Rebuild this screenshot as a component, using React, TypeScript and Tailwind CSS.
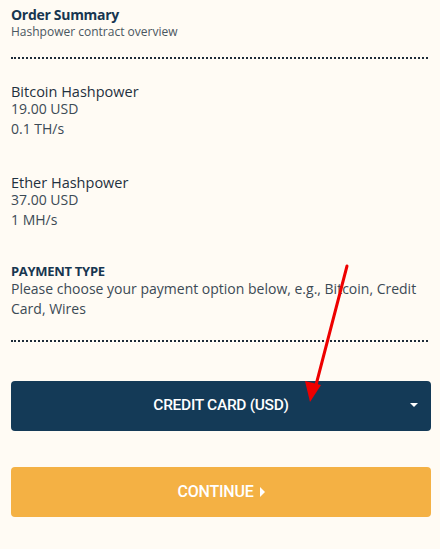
import React from "react";

const Divider: React.FC = () => (
  <div className="border-b-2 border-dotted border-[#1d2b38] w-full" />
);

const Item: React.FC<{ name: string; price: string; rate: string }> = (props) => (
  <div className="flex flex-col">
    <span className="text-[14.5px] leading-[17px] text-[#1f3140]">{props.name}</span>
    <span className="text-[14px] leading-[18px] text-[#3c4a55]">{props.price}</span>
    <span className="text-[14px] leading-[18px] mt-[2px] text-[#3c4a55]">{props.rate}</span>
  </div>
);

const App: React.FC = () => {
  return (
    <div
      className="relative w-[440px] h-[549px] bg-[#fffbf4] px-[11px] pt-[5px]"
      style={{ fontFamily: "'Open Sans', 'Liberation Sans', sans-serif" }}
    >
      <div className="flex flex-col">
        <span className="text-[14px] leading-[20px] font-bold text-[#173650] tracking-[-0.3px]">Order Summary</span>
        <span className="text-[12px] leading-[14px] text-[#4a5660]">Hashpower contract overview</span>
      </div>

      <div className="mt-[18px] mr-[1px]">
        <Divider />
      </div>

      <div className="mt-[24px] flex flex-col gap-[36px]">
        <Item name="Bitcoin Hashpower" price="19.00 USD" rate="0.1 TH/s" />
        <Item name="Ether Hashpower" price="37.00 USD" rate="1 MH/s" />
      </div>

      <div className="mt-[35px] flex flex-col">
        <span className="text-[13px] leading-[15px] font-bold uppercase text-[#173650] tracking-[-0.3px]">
          Payment Type
        </span>
        <span className="text-[14px] leading-[20px] text-[#3c4a55]">
          Please choose your payment option below, e.g., Bitcoin, Credit Card, Wires
        </span>
      </div>

      <div className="mt-[21px] mr-[1px]">
        <Divider />
      </div>

      <button
        className="mt-[39px] w-[420px] h-[50px] rounded-[4px] bg-[#143a57] text-white relative flex items-center justify-center"
        style={{ fontFamily: "Roboto, 'Liberation Sans', sans-serif" }}
      >
        <span className="text-[15.5px] font-medium tracking-[-0.3px]">CREDIT CARD (USD)</span>
        <span className="absolute right-[13px] top-[22px] w-0 h-0 border-l-[4px] border-r-[4px] border-t-[4px] border-l-transparent border-r-transparent border-t-white" />
      </button>

      <button
        className="mt-[36px] w-[420px] h-[50px] rounded-[4px] bg-[#f4b144] text-white flex items-center justify-center gap-[6px]"
        style={{ fontFamily: "Roboto, 'Liberation Sans', sans-serif" }}
      >
        <span className="text-[16px] font-medium tracking-[-0.2px]">CONTINUE</span>
        <span className="w-0 h-0 border-t-[5px] border-b-[5px] border-l-[5px] border-t-transparent border-b-transparent border-l-white" />
      </button>

      <svg className="absolute left-0 top-0 pointer-events-none" width="440" height="549">
        <line x1="347" y1="266" x2="316" y2="385" stroke="#ee0000" strokeWidth="3" strokeLinecap="round" />
        <polygon points="310,402 305,381 321,385" fill="#ee0000" />
      </svg>
    </div>
  );
};

export default App;
